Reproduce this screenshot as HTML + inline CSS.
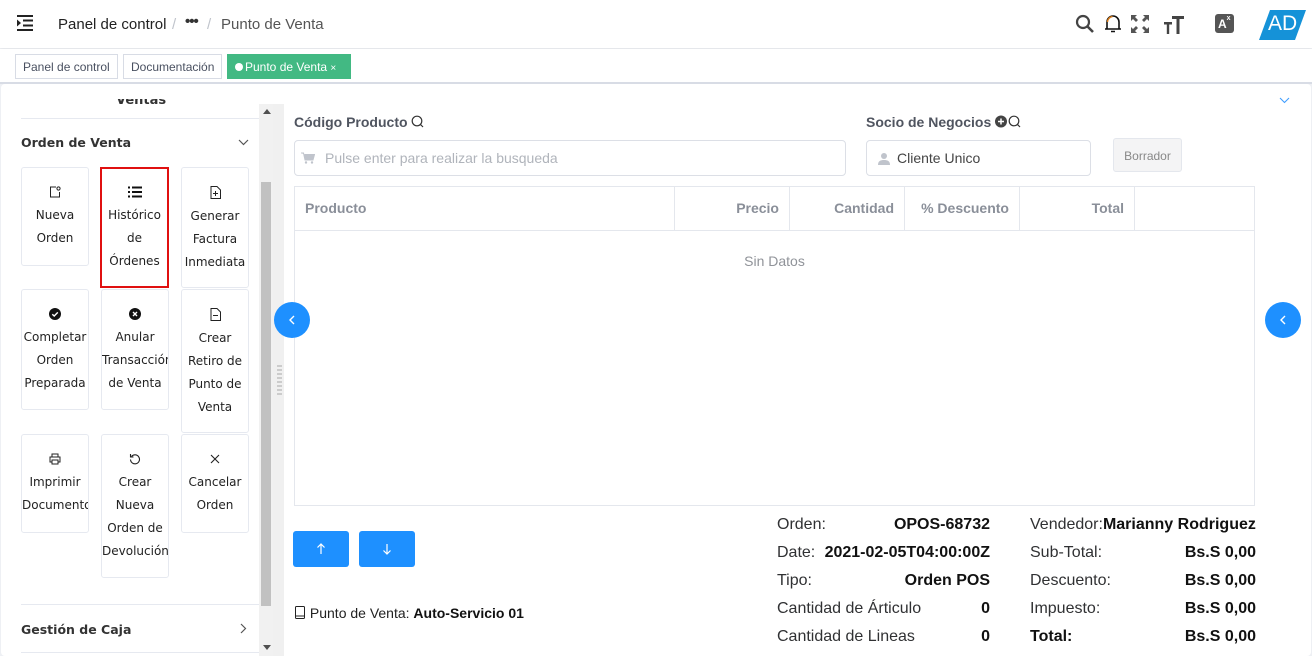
<!DOCTYPE html>
<html><head><meta charset="utf-8"><style>
*{box-sizing:border-box;margin:0;padding:0}
body{width:1312px;height:656px;overflow:hidden;background:#eef0f4;font-family:"Liberation Sans",sans-serif;position:relative;color:#303133}
.a{position:absolute}
.hdr{left:0;top:0;width:1312px;height:48px;background:#fff;box-shadow:0 1px 3px rgba(0,0,0,.06)}
.tabs{left:0;top:49px;width:1312px;height:33px;background:#fff}
.tab{position:absolute;top:4px;height:25px;border:1px solid #d8dce5;font-size:12px;line-height:25px;padding:0 7px;color:#495060;background:#fff}
.main{left:1px;top:84px;width:1310px;height:572px;background:#fff;border-radius:4px}
.card{position:absolute;border:1px solid #e6e9f0;border-radius:3px;text-align:center;font-family:"DejaVu Sans",sans-serif;font-size:12px;line-height:23px;color:#222;overflow:hidden;white-space:nowrap}
.card svg{display:block;margin:18px auto 6px}
.lbl{font-size:14px;font-weight:bold;color:#505560}
.inp{position:absolute;height:36px;border:1px solid #dcdfe6;border-radius:4px;font-size:14px;line-height:34px}
.th{position:absolute;top:0;height:44px;line-height:42px;font-size:14px;font-weight:bold;color:#8a8f99;border-right:1px solid #e4e7ed}
.sm{font-size:16px;color:#303133}
.b{font-weight:bold;color:#111}
.btn{position:absolute;top:531px;width:56px;height:36px;background:#1e90ff;border-radius:3px}
.circ{position:absolute;width:36px;height:36px;border-radius:50%;background:#1e90ff}
</style></head><body>
<div class="a hdr">
<svg class="a" style="left:16px;top:15px" width="18" height="16" viewBox="0 0 18 16"><path d="M1 1h16M7 5.5h10M7 10.5h10M1 15h16" stroke="#222" stroke-width="2"/><path d="M1 4.5l4 3.5-4 3.5z" fill="#222"/></svg>
<div class="a" style="left:58px;top:16px;font-size:15px;color:#222">Panel de control</div>
<div class="a" style="left:172px;top:16px;font-size:15px;color:#c0c4cc">/</div>
<div class="a" style="left:185px;top:13px;font-size:15px;color:#333;font-weight:bold;letter-spacing:-1px">•••</div>
<div class="a" style="left:207px;top:16px;font-size:15px;color:#c0c4cc">/</div>
<div class="a" style="left:221px;top:16px;font-size:15px;color:#555">Punto de Venta</div>
<svg class="a" style="left:1075px;top:14px" width="20" height="20" viewBox="0 0 20 20"><circle cx="8" cy="8" r="6" fill="none" stroke="#444" stroke-width="2.2"/><path d="M12.5 12.5l5.5 5.5" stroke="#444" stroke-width="2.6"/></svg>
<svg class="a" style="left:1104px;top:13px" width="18" height="20" viewBox="0 0 18 20"><path d="M3 16V9a6 6 0 0 1 12 0v7zM1 16h16M7 18.5h4" fill="none" stroke="#111" stroke-width="1.6"/><path d="M3.5 9a5.5 5.5 0 0 1 5-5.4" stroke="#d87a16" stroke-width="1.4" fill="none"/></svg>
<svg class="a" style="left:1131px;top:15px" width="18" height="18" viewBox="0 0 18 18" fill="#555"><path d="M0 0h6l-2 2 3 3-2 2-3-3-2 2zM18 0v6l-2-2-3 3-2-2 3-3-2-2zM0 18v-6l2 2 3-3 2 2-3 3 2 2zM18 18h-6l2-2-3-3 2-2 3 3 2-2z"/></svg>
<svg class="a" style="left:1163px;top:14px" width="22" height="20" viewBox="0 0 22 20" fill="#444"><path d="M9 2h12v3h-4.5v15h-3V5H9zM1 8h8v2.5H6.2V20H3.8v-9.5H1z"/></svg>
<div class="a" style="left:1215px;top:14px;width:19px;height:19px;background:#555;border-radius:3px;color:#fff;font-size:12px;font-weight:bold;line-height:21px;padding-left:3px">A<span style="font-size:7px;vertical-align:top;line-height:10px">x</span></div>
<svg class="a" style="left:1259px;top:10px" width="47" height="30" viewBox="0 0 47 30"><path d="M11 0h36L36 30H0z" fill="#1592d8"/></svg>
<div class="a" style="left:1268px;top:12px;font-size:21px;color:#fff">AD</div>
</div>
<div class="a tabs">
<div class="tab" style="left:15px;top:5px">Panel de control</div>
<div class="tab" style="left:123px;top:5px">Documentación</div>
<div class="tab" style="left:227px;top:5px;width:124px;background:#42b983;border-color:#42b983;color:#fff"><span style="display:inline-block;width:8px;height:8px;border-radius:50%;background:#fff;margin-right:2px"></span>Punto de Venta <span style="font-size:10px">×</span></div>
</div>
<div class="a" style="left:0;top:82px;width:1312px;height:2px;background:#d8dce5"></div>
<div class="a main"></div>
<!-- sidebar -->
<div class="a" style="left:116px;top:99px;width:60px;height:11px;overflow:hidden"><div style="margin-top:-6px;font-family:'DejaVu Sans',sans-serif;font-size:13px;font-weight:bold;color:#333">Ventas</div></div>
<div class="a" style="left:21px;top:118px;width:238px;height:1px;background:#e6e9f0"></div>
<div class="a" style="left:21px;top:135px;font-family:'DejaVu Sans',sans-serif;font-size:12.5px;font-weight:bold;color:#333">Orden de Venta</div>
<svg class="a" style="left:238px;top:139px" width="11" height="7" viewBox="0 0 11 7"><path d="M1 1l4.5 4.5L10 1" fill="none" stroke="#555" stroke-width="1.2"/></svg>
<div class="card" style="left:21px;top:167px;width:68px;height:99px"><svg width="12" height="12" viewBox="0 0 12 12"><path d="M7 1H1.5v10h9V6" fill="none" stroke="#222"/><circle cx="9.5" cy="2.5" r="1.6" fill="none" stroke="#222"/></svg>Nueva<br>Orden</div>
<div class="card" style="left:100px;top:167px;width:69px;height:121px;border:2px solid #e01010;border-radius:0"><svg width="14" height="12" viewBox="0 0 14 12" style="margin-top:17px"><path d="M0 1.5h2M4 1.5h10M0 6h2M4 6h10M0 10.5h2M4 10.5h10" stroke="#111" stroke-width="2"/></svg>Histórico<br>de<br>Órdenes</div>
<div class="card" style="left:181px;top:167px;width:68px;height:121px"><svg width="11" height="13" viewBox="0 0 11 13"><path d="M1 .5h6l3.5 3.5v8.5H1z" fill="none" stroke="#222"/><path d="M5.5 5v5M3 7.5h5" stroke="#222"/></svg>Generar<br>Factura<br>Inmediata</div>
<div class="card" style="left:21px;top:289px;width:68px;height:121px"><svg width="12" height="12" viewBox="0 0 12 12"><circle cx="6" cy="6" r="6" fill="#111"/><path d="M3.3 6.2l1.9 1.8 3.6-3.6" stroke="#fff" stroke-width="1.4" fill="none"/></svg>Completar<br>Orden<br>Preparada</div>
<div class="card" style="left:101px;top:289px;width:68px;height:121px"><svg width="12" height="12" viewBox="0 0 12 12"><circle cx="6" cy="6" r="6" fill="#111"/><path d="M4 4l4 4M8 4l-4 4" stroke="#fff" stroke-width="1.4"/></svg>Anular<br>Transacción<br>de Venta</div>
<div class="card" style="left:181px;top:289px;width:68px;height:144px"><svg width="11" height="13" viewBox="0 0 11 13"><path d="M1 .5h6l3.5 3.5v8.5H1z" fill="none" stroke="#222"/><path d="M3 7.5h5" stroke="#222"/></svg>Crear<br>Retiro de<br>Punto de<br>Venta</div>
<div class="card" style="left:21px;top:434px;width:68px;height:99px"><svg width="12" height="12" viewBox="0 0 12 12"><path d="M3 4V1h6v3M3 9H1V4h10v5H9M3 7h6v4H3z" fill="none" stroke="#222"/></svg>Imprimir<br>Documento</div>
<div class="card" style="left:101px;top:434px;width:68px;height:144px"><svg width="12" height="12" viewBox="0 0 12 12"><path d="M2.5 3.5A4.5 4.5 0 1 1 1.5 6.5" fill="none" stroke="#222" stroke-width="1.1"/><path d="M1.5 1v3h3" fill="none" stroke="#222" stroke-width="1.1"/></svg>Crear<br>Nueva<br>Orden de<br>Devolución</div>
<div class="card" style="left:181px;top:434px;width:68px;height:99px"><svg width="10" height="10" viewBox="0 0 10 10" style="margin-top:19px;margin-bottom:7px"><path d="M1 1l8 8M9 1l-8 8" stroke="#222" stroke-width="1.1"/></svg>Cancelar<br>Orden</div>
<div class="a" style="left:21px;top:604px;width:238px;height:1px;background:#e6e9f0"></div>
<div class="a" style="left:21px;top:622px;font-family:'DejaVu Sans',sans-serif;font-size:12.5px;font-weight:bold;color:#333">Gestión de Caja</div>
<svg class="a" style="left:240px;top:623px" width="7" height="11" viewBox="0 0 7 11"><path d="M1 1l4.5 4.5L1 10" fill="none" stroke="#555" stroke-width="1.2"/></svg>
<div class="a" style="left:21px;top:652px;width:238px;height:1px;background:#e6e9f0"></div>
<!-- scrollbar -->
<div class="a" style="left:259px;top:104px;width:14px;height:552px;background:#f1f1f1"></div>
<div class="a" style="left:261px;top:182px;width:10px;height:424px;background:#c1c1c1"></div>
<div class="a" style="left:263px;top:109px;width:0;height:0;border:4px solid transparent;border-bottom:5px solid #505050;border-top:0"></div>
<div class="a" style="left:263px;top:645px;width:0;height:0;border:4px solid transparent;border-top:5px solid #505050;border-bottom:0"></div>
<div class="a" style="left:273px;top:104px;width:11px;height:552px;background:#f0f0f0"></div>
<div class="a" style="left:277px;top:365px;width:5px;height:30px;background:repeating-linear-gradient(#ccc 0 2px,transparent 2px 4px)"></div>
<!-- main -->
<div class="a lbl" style="left:294px;top:114px">Código Producto <svg width="13" height="13" viewBox="0 0 13 13" style="vertical-align:-1px"><circle cx="6" cy="6" r="4.8" fill="none" stroke="#333" stroke-width="1.2"/><path d="M9.5 9.5l2.5 2.5" stroke="#333" stroke-width="1.2"/></svg></div>
<div class="inp" style="left:294px;top:140px;width:552px;color:#b0b4bb;padding-left:30px">Pulse enter para realizar la busqueda
<svg class="a" style="left:6px;top:11px" width="14" height="12" viewBox="0 0 14 12"><path d="M0 1h2.5l1.5 7h8l1.5-5.5H3.5" fill="#c0c4cc" stroke="#c0c4cc"/><circle cx="5" cy="10.5" r="1.2" fill="#c0c4cc"/><circle cx="11" cy="10.5" r="1.2" fill="#c0c4cc"/></svg></div>
<div class="a lbl" style="left:866px;top:114px">Socio de Negocios <svg width="28" height="13" viewBox="0 0 28 13" style="vertical-align:-1px"><circle cx="6" cy="6.5" r="6" fill="#444"/><path d="M6 3.5v6M3 6.5h6" stroke="#fff" stroke-width="1.5"/><circle cx="19" cy="6" r="4.8" fill="none" stroke="#333" stroke-width="1.2"/><path d="M22.5 9.5l2.5 2.5" stroke="#333" stroke-width="1.2"/></svg></div>
<div class="inp" style="left:866px;top:140px;width:225px;color:#444;padding-left:30px">Cliente Unico
<svg class="a" style="left:11px;top:12px" width="12" height="12" viewBox="0 0 12 12"><circle cx="6" cy="3" r="3" fill="#c0c4cc"/><path d="M0 12c0-4 2.5-5 6-5s6 1 6 5z" fill="#c0c4cc"/></svg></div>
<div class="a" style="left:1113px;top:138px;width:69px;height:34px;background:#f4f4f5;border:1px solid #e4e7ed;border-radius:3px;font-size:12px;color:#888;text-align:center;line-height:34px">Borrador</div>
<div class="a" style="left:294px;top:186px;width:961px;height:320px;border:1px solid #e4e7ed">
<div class="a" style="left:0;top:43px;width:959px;height:1px;background:#e4e7ed"></div>
<div class="th" style="left:0;width:380px;padding-left:10px">Producto</div>
<div class="th" style="left:380px;width:115px;text-align:right;padding-right:10px">Precio</div>
<div class="th" style="left:495px;width:115px;text-align:right;padding-right:10px">Cantidad</div>
<div class="th" style="left:610px;width:115px;text-align:right;padding-right:10px">% Descuento</div>
<div class="th" style="left:725px;width:115px;text-align:right;padding-right:10px">Total</div>
<div class="a" style="left:0;top:66px;width:959px;text-align:center;font-size:14px;color:#909399">Sin Datos</div>
</div>
<svg class="a" style="left:1279px;top:97px" width="11" height="7" viewBox="0 0 11 7"><path d="M1 1l4.5 4.5L10 1" fill="none" stroke="#409eff" stroke-width="1.1"/></svg>
<div class="circ" style="left:274px;top:302px"><svg width="36" height="36" viewBox="0 0 36 36"><path d="M20 14l-4 4 4 4" fill="none" stroke="#fff" stroke-width="1.4"/></svg></div>
<div class="circ" style="left:1265px;top:302px"><svg width="36" height="36" viewBox="0 0 36 36"><path d="M20 14l-4 4 4 4" fill="none" stroke="#fff" stroke-width="1.4"/></svg></div>
<div class="btn" style="left:293px"><svg width="56" height="36" viewBox="0 0 56 36"><path d="M28 23v-10M24.5 16.5L28 13l3.5 3.5" fill="none" stroke="#fff" stroke-width="1.2"/></svg></div>
<div class="btn" style="left:359px"><svg width="56" height="36" viewBox="0 0 56 36"><path d="M28 13v10M24.5 19.5L28 23l3.5-3.5" fill="none" stroke="#fff" stroke-width="1.2"/></svg></div>
<div class="a" style="left:294px;top:605px;font-size:14px;color:#222"><svg width="12" height="13" viewBox="0 0 12 13" style="vertical-align:-1px"><rect x="1.5" y=".5" width="9" height="12" rx="1" fill="none" stroke="#222"/><path d="M1.5 10h9" stroke="#222"/></svg> Punto de Venta: <b class="b">Auto-Servicio 01</b></div>
<div class="a sm" style="left:777px;top:511px;width:213px;line-height:28px">
<div>Orden:<b class="b" style="float:right">OPOS-68732</b></div>
<div>Date: <b class="b" style="float:right">2021-02-05T04:00:00Z</b></div>
<div>Tipo:<b class="b" style="float:right">Orden POS</b></div>
<div>Cantidad de Árticulo<b class="b" style="float:right">0</b></div>
<div>Cantidad de Lineas<b class="b" style="float:right">0</b></div>
</div>
<div class="a sm" style="left:1030px;top:511px;width:226px;line-height:28px">
<div>Vendedor:<b class="b">Marianny Rodriguez</b></div>
<div>Sub-Total:<b class="b" style="float:right">Bs.S 0,00</b></div>
<div>Descuento:<b class="b" style="float:right">Bs.S 0,00</b></div>
<div>Impuesto:<b class="b" style="float:right">Bs.S 0,00</b></div>
<div><b class="b">Total:</b><b class="b" style="float:right">Bs.S 0,00</b></div>
</div>
</body></html>
